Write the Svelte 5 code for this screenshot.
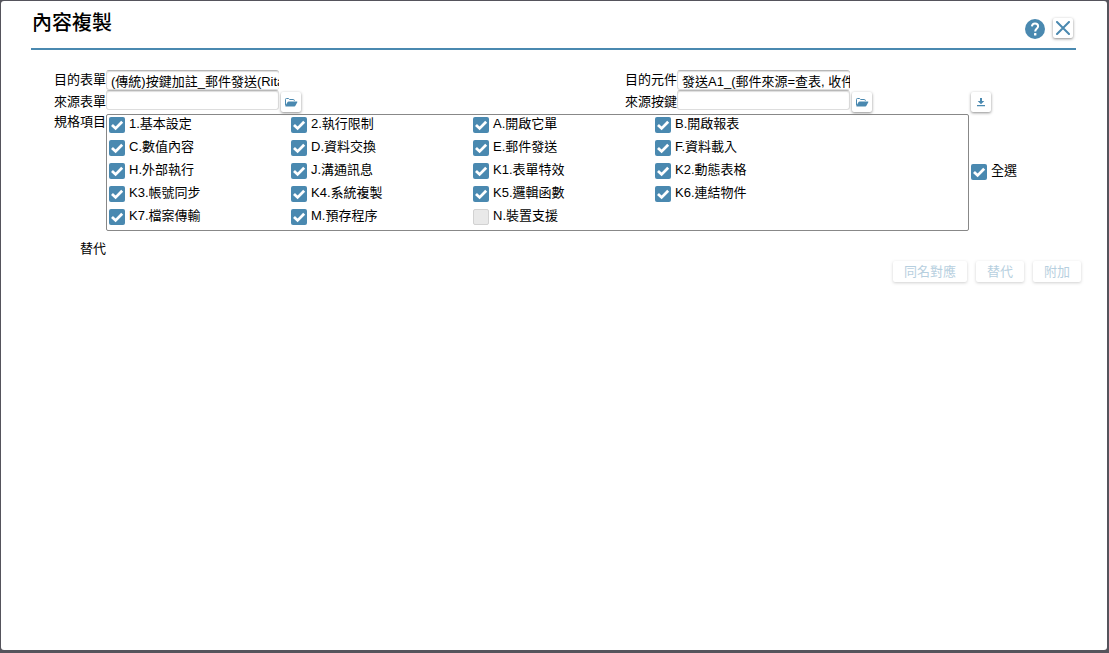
<script>
  let items = $state([
    '1.基本設定', '2.執行限制', 'A.開啟它單', 'B.開啟報表',
    'C.數值內容', 'D.資料交換', 'E.郵件發送', 'F.資料載入',
    'H.外部執行', 'J.溝通訊息', 'K1.表單特效', 'K2.動態表格',
    'K3.帳號同步', 'K4.系統複製', 'K5.邏輯函數', 'K6.連結物件',
    'K7.檔案傳輸', 'M.預存程序', 'N.裝置支援'
  ].map((label) => ({ label, checked: !label.startsWith('N.'), disabled: label.startsWith('N.') })));

  let all = $state(true);

  function toggleAll() {
    for (const item of items) {
      if (!item.disabled) item.checked = all;
    }
  }
</script>

{#snippet folder()}
  <svg width="14" height="12" viewBox="0 0 14 12" aria-hidden="true">
    <path d="M1.5 9.4V3.4Q1.5 2.5 2.4 2.5H4.6L5.6 3.5H9.4Q10.3 3.5 10.3 4.4V5" fill="none" stroke="#4a89b0" stroke-width="1" />
    <path d="M4.7 5.6H12.9Q13.7 5.6 13.3 6.2L11.4 9.8Q11.1 10.5 10.4 10.5H1.8Q1 10.5 1.4 9.8L3.4 6.3Q3.8 5.6 4.7 5.6Z" fill="#4a89b0" />
  </svg>
{/snippet}

<main class="dialog">
  <header>
    <h1>內容複製</h1>
    <div class="tools">
      <button class="help" type="button" aria-label="說明">
        <svg width="20" height="20" viewBox="0 0 20 20" aria-hidden="true">
          <circle cx="10" cy="10" r="10" fill="#4a89b0" />
          <path d="M6.9 7.4C7.1 5.4 8.3 4.5 10 4.5S13.1 5.5 13.1 7.2C13.1 9.4 10.2 9.5 10.2 12.4" fill="none" stroke="#fff" stroke-width="2" />
          <rect x="9" y="14" width="2.4" height="2.4" rx=".5" fill="#fff" />
        </svg>
      </button>
      <button class="icon" type="button" aria-label="關閉">
        <svg width="14" height="14" viewBox="0 0 14 14" aria-hidden="true">
          <path d="M1 1L13 13M13 1L1 13" fill="none" stroke="#4a89b0" stroke-width="2" stroke-linecap="round" />
        </svg>
      </button>
    </div>
  </header>

  <form>
    <label for="target-form" class="first">目的表單</label>
    <div class="field">
      <input id="target-form" type="text" value="(傳統)按鍵加註_郵件發送(Rita)" readonly />
    </div>
    <label for="target-part" class="first">目的元件</label>
    <div class="field wide">
      <input id="target-part" type="text" value="發送A1_(郵件來源=查表, 收件者)" readonly />
    </div>

    <label for="source-form" class="second">來源表單</label>
    <div class="field">
      <input id="source-form" type="text" />
      <button class="icon" type="button" aria-label="選擇表單">{@render folder()}</button>
    </div>
    <label for="source-key" class="second">來源按鍵</label>
    <div class="field">
      <input id="source-key" type="text" />
      <button class="icon" type="button" aria-label="選擇按鍵">{@render folder()}</button>
    </div>
    <div class="side">
      <button class="icon" type="button" aria-label="下載">
        <svg width="8" height="10" viewBox="0 0 8 10" aria-hidden="true">
          <path d="M3 1H5V4H7.3L4 7.3L.7 4H3ZM0 8H8V9.2H0Z" fill="#4a89b0" />
        </svg>
      </button>
    </div>

    <span class="caption" id="spec">規格項目</span>
    <div class="options" role="group" aria-labelledby="spec">
      {#each items as item}
        <label class="check">
          <input type="checkbox" bind:checked={item.checked} disabled={item.disabled} />
          <span>{item.label}</span>
        </label>
      {/each}
    </div>
    <div class="side middle">
      <label class="check">
        <input type="checkbox" bind:checked={all} onchange={toggleAll} />
        <span>全選</span>
      </label>
    </div>

    <span class="replace">替代</span>
    <div class="actions">
      <button type="button" disabled>同名對應</button>
      <button type="button" disabled>替代</button>
      <button type="button" disabled>附加</button>
    </div>
  </form>
</main>

<style>
  :global(body) {
    background: #55545c;
  }

  .dialog {
    box-sizing: border-box;
    min-height: calc(100vh - 4px);
    margin: 1px 2px 3px 1px;
    padding: 0 26px 20px 30px;
    border-radius: 3px;
    background: #fff;
    color: #000;
    font: 13px/18px "Liberation Sans", "Noto Sans CJK TC", sans-serif;
    display: flow-root;
  }

  header {
    display: flex;
    justify-content: space-between;
    align-items: flex-start;
    height: 47px;
    margin-right: 5px;
    border-bottom: 2px solid #4a89b0;
  }

  h1 {
    margin: 8px 0 0 1px;
    font-size: 20px;
    line-height: 28px;
    font-weight: 500;
  }

  .tools {
    display: flex;
    gap: 8px;
    margin: 17px 3px 0 0;
  }

  button {
    box-sizing: border-box;
    border: 0;
    background: #fff;
    font: inherit;
    color: #4a89b0;
  }

  .help {
    display: flex;
    padding: 1px 0 0;
  }

  .icon {
    display: grid;
    place-items: center;
    width: 20px;
    height: 20px;
    padding: 0;
    border-radius: 2px;
    box-shadow: 0 1px 3px rgb(0 0 0 / 45%);
  }

  form {
    display: grid;
    grid-template-columns: 75px minmax(0, 1fr) 52px 292px 112px;
    grid-template-rows: 20px 24px auto auto;
    margin-top: 20px;
  }

  form > label,
  .caption,
  .replace {
    text-align: right;
    white-space: nowrap;
  }

  .first {
    padding-top: 1px;
  }

  .second {
    padding-top: 3px;
  }

  .field {
    display: flex;
    gap: 2px;
  }

  .wide {
    grid-column: span 2;
  }

  .field input {
    box-sizing: border-box;
    width: 173px;
    height: 20px;
    padding: 0 0 0 4px;
    border: 1px solid #ddd;
    border-top-color: #b8b8b8;
    border-radius: 3px;
    background: #fff;
    box-shadow: inset 0 1px 1px #ddd;
    font: inherit;
    color: inherit;
  }

  .field input[readonly] {
    border-right-width: 0;
  }

  .field .icon,
  .side .icon {
    margin-top: 2px;
  }

  .side {
    padding-left: 2px;
  }

  .middle {
    align-self: center;
    margin-top: -4px;
  }

  .caption {
    margin-top: -1px;
  }

  .options {
    grid-column: 2 / span 3;
    display: grid;
    grid-template-columns: repeat(4, 182px);
    grid-auto-rows: 23px;
    padding-left: 2px;
    border: 1px solid #888;
    border-radius: 2px;
  }

  .check {
    display: flex;
    align-items: flex-start;
    gap: 4px;
  }

  .check input {
    appearance: none;
    box-sizing: border-box;
    flex: none;
    width: 16px;
    height: 16px;
    margin: 2px 0 0;
    border-radius: 2px;
    background: #4a89b0;
  }

  .check input:checked {
    background: #4a89b0 url("data:image/svg+xml,%3Csvg xmlns='http://www.w3.org/2000/svg' viewBox='0 0 16 16'%3E%3Cpath d='M3 8L6.6 11.4L13.2 4.8' fill='none' stroke='white' stroke-width='2.8'/%3E%3C/svg%3E");
  }

  .check input:not(:checked) {
    border: 1px solid #d2d2d2;
    background: #e9e9e9;
  }

  .replace {
    margin-top: 9px;
  }

  .actions {
    grid-column: 2 / -1;
    display: flex;
    justify-content: flex-end;
    gap: 9px;
    margin-top: 30px;
  }

  .actions button {
    height: 21px;
    padding: 0 11px;
    border-radius: 2px;
    box-shadow: 0 1px 3px rgb(0 0 0 / 45%);
    opacity: 0.4;
  }
</style>
